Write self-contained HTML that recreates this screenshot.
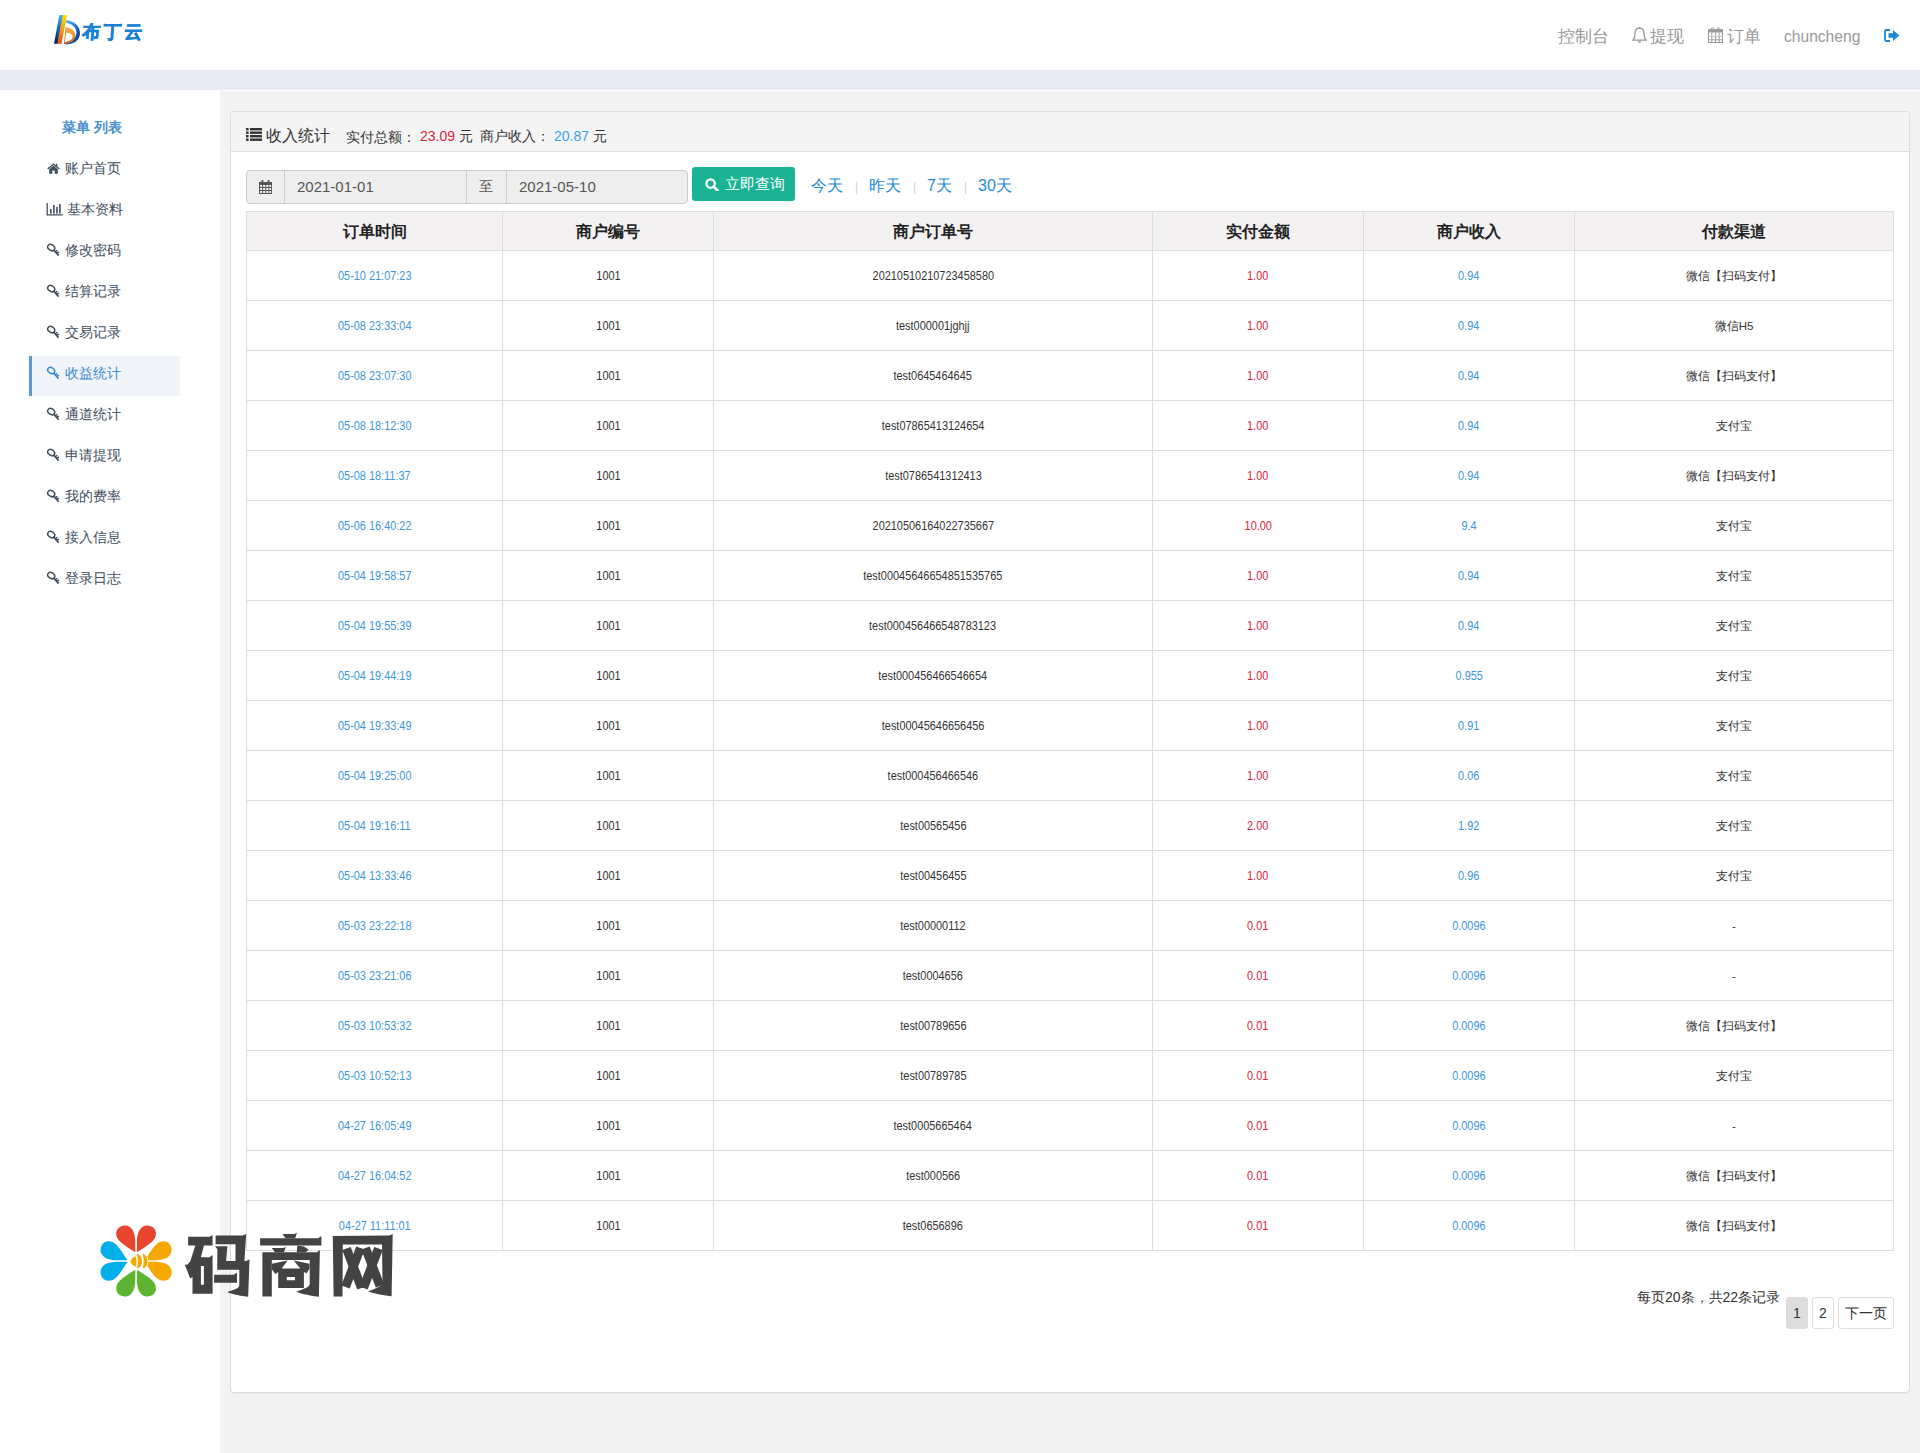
<!DOCTYPE html>
<html><head><meta charset="utf-8"><title>收益统计</title>
<style>
*{box-sizing:border-box;margin:0;padding:0}
html,body{width:1920px;height:1453px;overflow:hidden;background:#fff;font-family:"Liberation Sans",sans-serif;color:#333}
.abs{position:absolute}
.header{position:absolute;left:0;top:0;width:1920px;height:70px;background:#fff}
.band{position:absolute;left:0;top:70px;width:1920px;height:20px;background:#e8ebf4}
.side{position:absolute;left:0;top:90px;width:220px;height:1363px;background:#fff}
.content{position:absolute;left:220px;top:91px;width:1700px;height:1362px;background:#f3f3f3}
.nav{position:absolute;top:27px;height:18px;line-height:18px;font-size:16.5px;color:#999;white-space:nowrap}
.menu-title{position:absolute;left:62px;top:119px;font-size:14px;font-weight:bold;color:#4a90d0;white-space:nowrap}
.mi{position:absolute;left:29px;width:151px;height:40px;font-size:14px;color:#3e4d5c;white-space:nowrap}
.mi .ic{position:absolute;left:18px;top:14px}
.mi span{position:absolute;left:36px;top:11px;line-height:16px}
.mi.active{background:#f1f5f9;border-left:3px solid #5b9ad5;color:#3a8ad0}
.panel{position:absolute;left:230px;top:111px;width:1680px;height:1282px;background:#fff;border:1px solid #ddd;border-radius:4px;overflow:hidden;box-shadow:0 1px 1px rgba(0,0,0,.05)}
.ph{position:absolute;left:0;top:0;width:1678px;height:40px;background:#f5f5f5;border-bottom:1px solid #ddd}
.txt{position:absolute;white-space:nowrap}
.ig{position:absolute;top:170px;height:34px;border:1px solid #ccc;background:#eee}
.cell{position:absolute;text-align:center;white-space:nowrap}
.num{display:inline-block;transform:scaleX(0.84);transform-origin:50% 50%}
.hl{position:absolute;height:1px;background:#ddd}
.vl{position:absolute;width:1px;background:#ddd}
</style></head><body>

<div class="header">
<svg class="abs" style="left:54px;top:14px" width="92" height="32" viewBox="0 0 92 32">
<defs>
<linearGradient id="gb" x1="0" y1="0" x2="0" y2="1"><stop offset="0" stop-color="#4db3f5"/><stop offset="0.5" stop-color="#0f62b8"/><stop offset="1" stop-color="#0b1a45"/></linearGradient>
<linearGradient id="gy" x1="0" y1="0" x2="0" y2="1"><stop offset="0" stop-color="#ffe000"/><stop offset="0.5" stop-color="#f59b1e"/><stop offset="1" stop-color="#e0501a"/></linearGradient>
<linearGradient id="gc" x1="0" y1="0" x2="1" y2="1"><stop offset="0" stop-color="#6cc6ff"/><stop offset="0.6" stop-color="#1060c0"/><stop offset="1" stop-color="#06267a"/></linearGradient>
<linearGradient id="go" x1="0" y1="0" x2="0" y2="1"><stop offset="0" stop-color="#f7a64a"/><stop offset="0.6" stop-color="#e8932a"/><stop offset="1" stop-color="#c0501a"/></linearGradient>
</defs>
<path d="M5.3 1 H9.6 L3.9 29.8 H0 Z" fill="url(#gb)"/>
<path d="M8.8 1 H13 L7.5 29.8 H3.2 Z" fill="url(#gy)"/>
<path d="M12.4 6 C20 7 26 12 26 19 C26 26 20 30.5 11 30.5 L12 28 C18 27 22 24 22.5 19 C22.5 13 17.5 9.5 11.8 9 Z" fill="url(#gc)"/>
<path d="M11.4 13 C17 14 22 17 21.5 22 C21 27 16 29.8 10 30 Z M12.3 18.6 L10.9 28.2 C15.5 27.5 18.5 25.5 18.6 22.5 C18.6 20 15.5 19 12.3 18.6 Z" fill="url(#go)" fill-rule="evenodd"/>
<text x="30" y="24.5" font-size="18" font-weight="bold" letter-spacing="3" fill="#1a80d0" stroke="#1a80d0" stroke-width="0.6" transform="skewX(-4)">布丁云</text>
</svg>
<div class="nav" style="left:1558px">控制台</div>
<svg class="abs" style="left:1632px;top:27px" width="15" height="17" viewBox="0 0 15 17"><path d="M7.5 1.2 C4.3 1.2 3 3.5 3 6.5 C3 10 2.3 11.8 1 13.2 H14 C12.7 11.8 12 10 12 6.5 C12 3.5 10.7 1.2 7.5 1.2 Z" stroke="#999" stroke-width="1.3" fill="none"/><circle cx="7.5" cy="1" r="0.9" fill="#999"/><path d="M5.8 14.2 H9.2 L8.6 15.8 H6.4 Z" fill="#999"/></svg>
<div class="nav" style="left:1650px">提现</div>
<svg class="abs" style="left:1708px;top:27px" width="15" height="16" viewBox="0 0 15 16"><path d="M3.4 4 V2.2 A1.3 1.6 0 0 1 6 2.2 V4 M9.2 4 V2.2 A1.3 1.6 0 0 1 11.8 2.2 V4" stroke="#999" stroke-width="0.9" fill="none"/><rect x="0.5" y="2.7" width="14" height="12.8" fill="none" stroke="#999" stroke-width="1"/><rect x="0.5" y="2.7" width="14" height="2.8" fill="#999"/><path d="M3.8 5.5 V15.5 M7.5 5.5 V15.5 M11.2 5.5 V15.5 M0.5 12.8 H14.5" stroke="#999" stroke-width="0.9"/><path d="M0.5 9.6 H14.5" stroke="#bbb" stroke-width="0.8"/></svg>
<div class="nav" style="left:1727px">订单</div>
<div class="nav" style="left:1784px;top:28px;font-size:15.6px">chuncheng</div>
<svg class="abs" style="left:1884px;top:29px" width="16" height="13" viewBox="0 0 16 13"><path d="M6 1 H2.5 C1.5 1 1 1.6 1 2.5 V10.5 C1 11.4 1.5 12 2.5 12 H6" stroke="#1a8ad8" stroke-width="1.8" fill="none"/><path d="M4.5 4.3 H9 V1 L15.3 6.5 L9 12 V8.7 H4.5 Z" fill="#1a8ad8"/></svg>
</div>
<div class="band"></div>
<div class="side"></div>
<div class="content"></div>
<div class="menu-title">菜单 列表</div>
<div class="abs" style="left:29px;top:356px;width:151px;height:40px;background:#f1f5f9;border-left:3px solid #5b9ad5"></div>
<div class="txt" style="left:65px;top:160px;font-size:14px;line-height:16px;color:#3e4d5c">账户首页</div>
<div class="abs" style="left:47px;top:163px"><svg class="ic" style="display:block" width="13" height="11" viewBox="0 0 13 11"><path d="M6.5 0.3 L0.2 5.6 L1.1 6.5 L6.5 2 L11.9 6.5 L12.8 5.6 L10.3 3.5 L10.3 0.8 L8.9 0.8 L8.9 2.3 Z M2.2 6.2 L2.2 10.8 L5.3 10.8 L5.3 7.6 L7.7 7.6 L7.7 10.8 L10.8 10.8 L10.8 6.2 L6.5 2.7 Z" fill="#3e4d5c"/></svg></div>
<div class="txt" style="left:67px;top:201px;font-size:14px;line-height:16px;color:#3e4d5c">基本资料</div>
<div class="abs" style="left:46px;top:203px"><svg class="ic" style="display:block" width="17" height="13" viewBox="0 0 17 13"><path d="M1.2 0 V11.9 H16.8" stroke="#3e4d5c" stroke-width="1.3" fill="none"/><rect x="4" y="6" width="1.6" height="4.6" fill="#3e4d5c"/><rect x="7.1" y="2" width="1.6" height="8.6" fill="#3e4d5c"/><rect x="10.2" y="4" width="1.6" height="6.6" fill="#3e4d5c"/><rect x="13.1" y="1" width="1.6" height="9.6" fill="#3e4d5c"/></svg></div>
<div class="txt" style="left:65px;top:242px;font-size:14px;line-height:16px;color:#3e4d5c">修改密码</div>
<div class="abs" style="left:46px;top:243px"><svg style="display:block" width="15" height="14" viewBox="0 0 15 14"><ellipse cx="5.2" cy="4.6" rx="3.7" ry="2.8" transform="rotate(32 5.2 4.6)" stroke="#3e4d5c" stroke-width="1.5" fill="none"/><path d="M7.3 6.6 L12.6 12.6" stroke="#3e4d5c" stroke-width="1.6" /><path d="M9.6 8.6 L11.3 7.2 M11.1 10.4 L12.9 8.9" stroke="#3e4d5c" stroke-width="1.4"/></svg></div>
<div class="txt" style="left:65px;top:283px;font-size:14px;line-height:16px;color:#3e4d5c">结算记录</div>
<div class="abs" style="left:46px;top:284px"><svg style="display:block" width="15" height="14" viewBox="0 0 15 14"><ellipse cx="5.2" cy="4.6" rx="3.7" ry="2.8" transform="rotate(32 5.2 4.6)" stroke="#3e4d5c" stroke-width="1.5" fill="none"/><path d="M7.3 6.6 L12.6 12.6" stroke="#3e4d5c" stroke-width="1.6" /><path d="M9.6 8.6 L11.3 7.2 M11.1 10.4 L12.9 8.9" stroke="#3e4d5c" stroke-width="1.4"/></svg></div>
<div class="txt" style="left:65px;top:324px;font-size:14px;line-height:16px;color:#3e4d5c">交易记录</div>
<div class="abs" style="left:46px;top:325px"><svg style="display:block" width="15" height="14" viewBox="0 0 15 14"><ellipse cx="5.2" cy="4.6" rx="3.7" ry="2.8" transform="rotate(32 5.2 4.6)" stroke="#3e4d5c" stroke-width="1.5" fill="none"/><path d="M7.3 6.6 L12.6 12.6" stroke="#3e4d5c" stroke-width="1.6" /><path d="M9.6 8.6 L11.3 7.2 M11.1 10.4 L12.9 8.9" stroke="#3e4d5c" stroke-width="1.4"/></svg></div>
<div class="txt" style="left:65px;top:365px;font-size:14px;line-height:16px;color:#3a8ad0">收益统计</div>
<div class="abs" style="left:46px;top:366px"><svg style="display:block" width="15" height="14" viewBox="0 0 15 14"><ellipse cx="5.2" cy="4.6" rx="3.7" ry="2.8" transform="rotate(32 5.2 4.6)" stroke="#3a8ad0" stroke-width="1.5" fill="none"/><path d="M7.3 6.6 L12.6 12.6" stroke="#3a8ad0" stroke-width="1.6" /><path d="M9.6 8.6 L11.3 7.2 M11.1 10.4 L12.9 8.9" stroke="#3a8ad0" stroke-width="1.4"/></svg></div>
<div class="txt" style="left:65px;top:406px;font-size:14px;line-height:16px;color:#3e4d5c">通道统计</div>
<div class="abs" style="left:46px;top:407px"><svg style="display:block" width="15" height="14" viewBox="0 0 15 14"><ellipse cx="5.2" cy="4.6" rx="3.7" ry="2.8" transform="rotate(32 5.2 4.6)" stroke="#3e4d5c" stroke-width="1.5" fill="none"/><path d="M7.3 6.6 L12.6 12.6" stroke="#3e4d5c" stroke-width="1.6" /><path d="M9.6 8.6 L11.3 7.2 M11.1 10.4 L12.9 8.9" stroke="#3e4d5c" stroke-width="1.4"/></svg></div>
<div class="txt" style="left:65px;top:447px;font-size:14px;line-height:16px;color:#3e4d5c">申请提现</div>
<div class="abs" style="left:46px;top:448px"><svg style="display:block" width="15" height="14" viewBox="0 0 15 14"><ellipse cx="5.2" cy="4.6" rx="3.7" ry="2.8" transform="rotate(32 5.2 4.6)" stroke="#3e4d5c" stroke-width="1.5" fill="none"/><path d="M7.3 6.6 L12.6 12.6" stroke="#3e4d5c" stroke-width="1.6" /><path d="M9.6 8.6 L11.3 7.2 M11.1 10.4 L12.9 8.9" stroke="#3e4d5c" stroke-width="1.4"/></svg></div>
<div class="txt" style="left:65px;top:488px;font-size:14px;line-height:16px;color:#3e4d5c">我的费率</div>
<div class="abs" style="left:46px;top:489px"><svg style="display:block" width="15" height="14" viewBox="0 0 15 14"><ellipse cx="5.2" cy="4.6" rx="3.7" ry="2.8" transform="rotate(32 5.2 4.6)" stroke="#3e4d5c" stroke-width="1.5" fill="none"/><path d="M7.3 6.6 L12.6 12.6" stroke="#3e4d5c" stroke-width="1.6" /><path d="M9.6 8.6 L11.3 7.2 M11.1 10.4 L12.9 8.9" stroke="#3e4d5c" stroke-width="1.4"/></svg></div>
<div class="txt" style="left:65px;top:529px;font-size:14px;line-height:16px;color:#3e4d5c">接入信息</div>
<div class="abs" style="left:46px;top:530px"><svg style="display:block" width="15" height="14" viewBox="0 0 15 14"><ellipse cx="5.2" cy="4.6" rx="3.7" ry="2.8" transform="rotate(32 5.2 4.6)" stroke="#3e4d5c" stroke-width="1.5" fill="none"/><path d="M7.3 6.6 L12.6 12.6" stroke="#3e4d5c" stroke-width="1.6" /><path d="M9.6 8.6 L11.3 7.2 M11.1 10.4 L12.9 8.9" stroke="#3e4d5c" stroke-width="1.4"/></svg></div>
<div class="txt" style="left:65px;top:570px;font-size:14px;line-height:16px;color:#3e4d5c">登录日志</div>
<div class="abs" style="left:46px;top:571px"><svg style="display:block" width="15" height="14" viewBox="0 0 15 14"><ellipse cx="5.2" cy="4.6" rx="3.7" ry="2.8" transform="rotate(32 5.2 4.6)" stroke="#3e4d5c" stroke-width="1.5" fill="none"/><path d="M7.3 6.6 L12.6 12.6" stroke="#3e4d5c" stroke-width="1.6" /><path d="M9.6 8.6 L11.3 7.2 M11.1 10.4 L12.9 8.9" stroke="#3e4d5c" stroke-width="1.4"/></svg></div>
<div class="panel"><div class="ph"></div></div>
<svg class="abs" style="left:246px;top:128px" width="16" height="13" viewBox="0 0 16 13"><rect x="0" y="0" width="2.6" height="2.4" fill="#333"/><rect x="4" y="0" width="12" height="2.4" fill="#333"/><rect x="0" y="3.5" width="2.6" height="2.4" fill="#333"/><rect x="4" y="3.5" width="12" height="2.4" fill="#333"/><rect x="0" y="7" width="2.6" height="2.4" fill="#333"/><rect x="4" y="7" width="12" height="2.4" fill="#333"/><rect x="0" y="10.5" width="2.6" height="2.4" fill="#333"/><rect x="4" y="10.5" width="12" height="2.4" fill="#333"/></svg>
<div class="txt" style="left:266px;top:127px;font-size:16px;line-height:18px;color:#333">收入统计</div>
<div class="txt" style="left:346px;top:129px;font-size:14px;line-height:16px;color:#333">实付总额：</div>
<div class="txt" style="left:420px;top:128px;font-size:14px;line-height:16px;color:#d8243c">23.09</div>
<div class="txt" style="left:459px;top:128px;font-size:14px;line-height:16px;color:#333">元</div>
<div class="txt" style="left:480px;top:128px;font-size:14px;line-height:16px;color:#333">商户收入：</div>
<div class="txt" style="left:554px;top:128px;font-size:14px;line-height:16px;color:#3aa0e8">20.87</div>
<div class="txt" style="left:593px;top:128px;font-size:14px;line-height:16px;color:#333">元</div>
<div class="ig" style="left:246px;width:39px;border-radius:4px 0 0 4px"></div>
<svg class="abs" style="left:259px;top:180px" width="13" height="14" viewBox="0 0 13 14"><rect x="0" y="2" width="13" height="12" fill="#555"/><rect x="2.5" y="0" width="1.8" height="3" fill="#555"/><rect x="8.7" y="0" width="1.8" height="3" fill="#555"/><g fill="#eee"><rect x="1" y="5" width="2.2" height="2"/><rect x="4.1" y="5" width="2.2" height="2"/><rect x="7.2" y="5" width="2.2" height="2"/><rect x="10.3" y="5" width="1.8" height="2"/><rect x="1" y="8" width="2.2" height="2"/><rect x="4.1" y="8" width="2.2" height="2"/><rect x="7.2" y="8" width="2.2" height="2"/><rect x="10.3" y="8" width="1.8" height="2"/><rect x="1" y="11" width="2.2" height="2"/><rect x="4.1" y="11" width="2.2" height="2"/><rect x="7.2" y="11" width="2.2" height="2"/><rect x="10.3" y="11" width="1.8" height="2"/></g></svg>
<div class="ig" style="left:284px;width:183px"></div>
<div class="txt" style="left:297px;top:178px;font-size:15px;line-height:17px;color:#555">2021-01-01</div>
<div class="ig" style="left:466px;width:41px"></div>
<div class="txt" style="left:479px;top:178px;font-size:14px;line-height:17px;color:#555">至</div>
<div class="ig" style="left:506px;width:182px;border-radius:0 4px 4px 0"></div>
<div class="txt" style="left:519px;top:178px;font-size:15px;line-height:17px;color:#555">2021-05-10</div>
<div class="abs" style="left:692px;top:167px;width:103px;height:34px;background:#1ab394;border-radius:3px"></div>
<svg class="abs" style="left:705px;top:178px" width="14" height="13" viewBox="0 0 14 13"><circle cx="5.6" cy="5.6" r="4.2" stroke="#fff" stroke-width="2.2" fill="none"/><path d="M8.6 8.6 L12.6 12.4" stroke="#fff" stroke-width="2.6" stroke-linecap="round"/></svg>
<div class="txt" style="left:725px;top:176px;font-size:14.5px;line-height:16px;color:#fff">立即查询</div>
<div class="txt" style="left:811px;top:177px;font-size:16px;line-height:18px;color:#1a8ad8">今天</div>
<div class="txt" style="left:855px;top:180px;font-size:12px;line-height:14px;color:#c8d4dc">|</div>
<div class="txt" style="left:869px;top:177px;font-size:16px;line-height:18px;color:#1a8ad8">昨天</div>
<div class="txt" style="left:913px;top:180px;font-size:12px;line-height:14px;color:#c8d4dc">|</div>
<div class="txt" style="left:927px;top:177px;font-size:16px;line-height:18px;color:#1a8ad8">7天</div>
<div class="txt" style="left:964px;top:180px;font-size:12px;line-height:14px;color:#c8d4dc">|</div>
<div class="txt" style="left:978px;top:177px;font-size:16px;line-height:18px;color:#1a8ad8">30天</div>
<div class="abs" style="left:246px;top:211px;width:1648px;height:40px;background:#f3f1f2"></div>
<div class="hl" style="left:246px;top:211px;width:1648px"></div>
<div class="hl" style="left:246px;top:250px;width:1648px"></div>
<div class="hl" style="left:246px;top:300px;width:1648px"></div>
<div class="hl" style="left:246px;top:350px;width:1648px"></div>
<div class="hl" style="left:246px;top:400px;width:1648px"></div>
<div class="hl" style="left:246px;top:450px;width:1648px"></div>
<div class="hl" style="left:246px;top:500px;width:1648px"></div>
<div class="hl" style="left:246px;top:550px;width:1648px"></div>
<div class="hl" style="left:246px;top:600px;width:1648px"></div>
<div class="hl" style="left:246px;top:650px;width:1648px"></div>
<div class="hl" style="left:246px;top:700px;width:1648px"></div>
<div class="hl" style="left:246px;top:750px;width:1648px"></div>
<div class="hl" style="left:246px;top:800px;width:1648px"></div>
<div class="hl" style="left:246px;top:850px;width:1648px"></div>
<div class="hl" style="left:246px;top:900px;width:1648px"></div>
<div class="hl" style="left:246px;top:950px;width:1648px"></div>
<div class="hl" style="left:246px;top:1000px;width:1648px"></div>
<div class="hl" style="left:246px;top:1050px;width:1648px"></div>
<div class="hl" style="left:246px;top:1100px;width:1648px"></div>
<div class="hl" style="left:246px;top:1150px;width:1648px"></div>
<div class="hl" style="left:246px;top:1200px;width:1648px"></div>
<div class="hl" style="left:246px;top:1250px;width:1648px"></div>
<div class="vl" style="left:246px;top:211px;height:1040px"></div>
<div class="vl" style="left:502px;top:211px;height:1040px"></div>
<div class="vl" style="left:713px;top:211px;height:1040px"></div>
<div class="vl" style="left:1152px;top:211px;height:1040px"></div>
<div class="vl" style="left:1363px;top:211px;height:1040px"></div>
<div class="vl" style="left:1574px;top:211px;height:1040px"></div>
<div class="vl" style="left:1893px;top:211px;height:1040px"></div>
<div class="cell" style="left:247px;width:255px;top:223px;line-height:18px;font-size:16px;font-weight:bold;color:#222">订单时间</div>
<div class="cell" style="left:503px;width:210px;top:223px;line-height:18px;font-size:16px;font-weight:bold;color:#222">商户编号</div>
<div class="cell" style="left:714px;width:438px;top:223px;line-height:18px;font-size:16px;font-weight:bold;color:#222">商户订单号</div>
<div class="cell" style="left:1153px;width:210px;top:223px;line-height:18px;font-size:16px;font-weight:bold;color:#222">实付金额</div>
<div class="cell" style="left:1364px;width:210px;top:223px;line-height:18px;font-size:16px;font-weight:bold;color:#222">商户收入</div>
<div class="cell" style="left:1575px;width:318px;top:223px;line-height:18px;font-size:16px;font-weight:bold;color:#222">付款渠道</div>
<div class="cell" style="left:247px;width:255px;top:251px;line-height:49px;font-size:13px;color:#3a97dc"><span class="num">05-10 21:07:23</span></div>
<div class="cell" style="left:503px;width:210px;top:251px;line-height:49px;font-size:13px;color:#333"><span class="num">1001</span></div>
<div class="cell" style="left:714px;width:438px;top:251px;line-height:49px;font-size:13px;color:#333"><span class="num">20210510210723458580</span></div>
<div class="cell" style="left:1153px;width:210px;top:251px;line-height:49px;font-size:13px;color:#d8243c"><span class="num">1.00</span></div>
<div class="cell" style="left:1364px;width:210px;top:251px;line-height:49px;font-size:13px;color:#3a97dc"><span class="num">0.94</span></div>
<div class="cell" style="left:1575px;width:318px;top:252px;line-height:49px;font-size:11.5px;color:#333">微信【扫码支付】</div>
<div class="cell" style="left:247px;width:255px;top:301px;line-height:49px;font-size:13px;color:#3a97dc"><span class="num">05-08 23:33:04</span></div>
<div class="cell" style="left:503px;width:210px;top:301px;line-height:49px;font-size:13px;color:#333"><span class="num">1001</span></div>
<div class="cell" style="left:714px;width:438px;top:301px;line-height:49px;font-size:13px;color:#333"><span class="num">test000001jghjj</span></div>
<div class="cell" style="left:1153px;width:210px;top:301px;line-height:49px;font-size:13px;color:#d8243c"><span class="num">1.00</span></div>
<div class="cell" style="left:1364px;width:210px;top:301px;line-height:49px;font-size:13px;color:#3a97dc"><span class="num">0.94</span></div>
<div class="cell" style="left:1575px;width:318px;top:302px;line-height:49px;font-size:11.5px;color:#333">微信H5</div>
<div class="cell" style="left:247px;width:255px;top:351px;line-height:49px;font-size:13px;color:#3a97dc"><span class="num">05-08 23:07:30</span></div>
<div class="cell" style="left:503px;width:210px;top:351px;line-height:49px;font-size:13px;color:#333"><span class="num">1001</span></div>
<div class="cell" style="left:714px;width:438px;top:351px;line-height:49px;font-size:13px;color:#333"><span class="num">test0645464645</span></div>
<div class="cell" style="left:1153px;width:210px;top:351px;line-height:49px;font-size:13px;color:#d8243c"><span class="num">1.00</span></div>
<div class="cell" style="left:1364px;width:210px;top:351px;line-height:49px;font-size:13px;color:#3a97dc"><span class="num">0.94</span></div>
<div class="cell" style="left:1575px;width:318px;top:352px;line-height:49px;font-size:11.5px;color:#333">微信【扫码支付】</div>
<div class="cell" style="left:247px;width:255px;top:401px;line-height:49px;font-size:13px;color:#3a97dc"><span class="num">05-08 18:12:30</span></div>
<div class="cell" style="left:503px;width:210px;top:401px;line-height:49px;font-size:13px;color:#333"><span class="num">1001</span></div>
<div class="cell" style="left:714px;width:438px;top:401px;line-height:49px;font-size:13px;color:#333"><span class="num">test07865413124654</span></div>
<div class="cell" style="left:1153px;width:210px;top:401px;line-height:49px;font-size:13px;color:#d8243c"><span class="num">1.00</span></div>
<div class="cell" style="left:1364px;width:210px;top:401px;line-height:49px;font-size:13px;color:#3a97dc"><span class="num">0.94</span></div>
<div class="cell" style="left:1575px;width:318px;top:402px;line-height:49px;font-size:11.5px;color:#333">支付宝</div>
<div class="cell" style="left:247px;width:255px;top:451px;line-height:49px;font-size:13px;color:#3a97dc"><span class="num">05-08 18:11:37</span></div>
<div class="cell" style="left:503px;width:210px;top:451px;line-height:49px;font-size:13px;color:#333"><span class="num">1001</span></div>
<div class="cell" style="left:714px;width:438px;top:451px;line-height:49px;font-size:13px;color:#333"><span class="num">test0786541312413</span></div>
<div class="cell" style="left:1153px;width:210px;top:451px;line-height:49px;font-size:13px;color:#d8243c"><span class="num">1.00</span></div>
<div class="cell" style="left:1364px;width:210px;top:451px;line-height:49px;font-size:13px;color:#3a97dc"><span class="num">0.94</span></div>
<div class="cell" style="left:1575px;width:318px;top:452px;line-height:49px;font-size:11.5px;color:#333">微信【扫码支付】</div>
<div class="cell" style="left:247px;width:255px;top:501px;line-height:49px;font-size:13px;color:#3a97dc"><span class="num">05-06 16:40:22</span></div>
<div class="cell" style="left:503px;width:210px;top:501px;line-height:49px;font-size:13px;color:#333"><span class="num">1001</span></div>
<div class="cell" style="left:714px;width:438px;top:501px;line-height:49px;font-size:13px;color:#333"><span class="num">20210506164022735667</span></div>
<div class="cell" style="left:1153px;width:210px;top:501px;line-height:49px;font-size:13px;color:#d8243c"><span class="num">10.00</span></div>
<div class="cell" style="left:1364px;width:210px;top:501px;line-height:49px;font-size:13px;color:#3a97dc"><span class="num">9.4</span></div>
<div class="cell" style="left:1575px;width:318px;top:502px;line-height:49px;font-size:11.5px;color:#333">支付宝</div>
<div class="cell" style="left:247px;width:255px;top:551px;line-height:49px;font-size:13px;color:#3a97dc"><span class="num">05-04 19:58:57</span></div>
<div class="cell" style="left:503px;width:210px;top:551px;line-height:49px;font-size:13px;color:#333"><span class="num">1001</span></div>
<div class="cell" style="left:714px;width:438px;top:551px;line-height:49px;font-size:13px;color:#333"><span class="num">test00045646654851535765</span></div>
<div class="cell" style="left:1153px;width:210px;top:551px;line-height:49px;font-size:13px;color:#d8243c"><span class="num">1.00</span></div>
<div class="cell" style="left:1364px;width:210px;top:551px;line-height:49px;font-size:13px;color:#3a97dc"><span class="num">0.94</span></div>
<div class="cell" style="left:1575px;width:318px;top:552px;line-height:49px;font-size:11.5px;color:#333">支付宝</div>
<div class="cell" style="left:247px;width:255px;top:601px;line-height:49px;font-size:13px;color:#3a97dc"><span class="num">05-04 19:55:39</span></div>
<div class="cell" style="left:503px;width:210px;top:601px;line-height:49px;font-size:13px;color:#333"><span class="num">1001</span></div>
<div class="cell" style="left:714px;width:438px;top:601px;line-height:49px;font-size:13px;color:#333"><span class="num">test000456466548783123</span></div>
<div class="cell" style="left:1153px;width:210px;top:601px;line-height:49px;font-size:13px;color:#d8243c"><span class="num">1.00</span></div>
<div class="cell" style="left:1364px;width:210px;top:601px;line-height:49px;font-size:13px;color:#3a97dc"><span class="num">0.94</span></div>
<div class="cell" style="left:1575px;width:318px;top:602px;line-height:49px;font-size:11.5px;color:#333">支付宝</div>
<div class="cell" style="left:247px;width:255px;top:651px;line-height:49px;font-size:13px;color:#3a97dc"><span class="num">05-04 19:44:19</span></div>
<div class="cell" style="left:503px;width:210px;top:651px;line-height:49px;font-size:13px;color:#333"><span class="num">1001</span></div>
<div class="cell" style="left:714px;width:438px;top:651px;line-height:49px;font-size:13px;color:#333"><span class="num">test000456466546654</span></div>
<div class="cell" style="left:1153px;width:210px;top:651px;line-height:49px;font-size:13px;color:#d8243c"><span class="num">1.00</span></div>
<div class="cell" style="left:1364px;width:210px;top:651px;line-height:49px;font-size:13px;color:#3a97dc"><span class="num">0.955</span></div>
<div class="cell" style="left:1575px;width:318px;top:652px;line-height:49px;font-size:11.5px;color:#333">支付宝</div>
<div class="cell" style="left:247px;width:255px;top:701px;line-height:49px;font-size:13px;color:#3a97dc"><span class="num">05-04 19:33:49</span></div>
<div class="cell" style="left:503px;width:210px;top:701px;line-height:49px;font-size:13px;color:#333"><span class="num">1001</span></div>
<div class="cell" style="left:714px;width:438px;top:701px;line-height:49px;font-size:13px;color:#333"><span class="num">test00045646656456</span></div>
<div class="cell" style="left:1153px;width:210px;top:701px;line-height:49px;font-size:13px;color:#d8243c"><span class="num">1.00</span></div>
<div class="cell" style="left:1364px;width:210px;top:701px;line-height:49px;font-size:13px;color:#3a97dc"><span class="num">0.91</span></div>
<div class="cell" style="left:1575px;width:318px;top:702px;line-height:49px;font-size:11.5px;color:#333">支付宝</div>
<div class="cell" style="left:247px;width:255px;top:751px;line-height:49px;font-size:13px;color:#3a97dc"><span class="num">05-04 19:25:00</span></div>
<div class="cell" style="left:503px;width:210px;top:751px;line-height:49px;font-size:13px;color:#333"><span class="num">1001</span></div>
<div class="cell" style="left:714px;width:438px;top:751px;line-height:49px;font-size:13px;color:#333"><span class="num">test000456466546</span></div>
<div class="cell" style="left:1153px;width:210px;top:751px;line-height:49px;font-size:13px;color:#d8243c"><span class="num">1.00</span></div>
<div class="cell" style="left:1364px;width:210px;top:751px;line-height:49px;font-size:13px;color:#3a97dc"><span class="num">0.06</span></div>
<div class="cell" style="left:1575px;width:318px;top:752px;line-height:49px;font-size:11.5px;color:#333">支付宝</div>
<div class="cell" style="left:247px;width:255px;top:801px;line-height:49px;font-size:13px;color:#3a97dc"><span class="num">05-04 19:16:11</span></div>
<div class="cell" style="left:503px;width:210px;top:801px;line-height:49px;font-size:13px;color:#333"><span class="num">1001</span></div>
<div class="cell" style="left:714px;width:438px;top:801px;line-height:49px;font-size:13px;color:#333"><span class="num">test00565456</span></div>
<div class="cell" style="left:1153px;width:210px;top:801px;line-height:49px;font-size:13px;color:#d8243c"><span class="num">2.00</span></div>
<div class="cell" style="left:1364px;width:210px;top:801px;line-height:49px;font-size:13px;color:#3a97dc"><span class="num">1.92</span></div>
<div class="cell" style="left:1575px;width:318px;top:802px;line-height:49px;font-size:11.5px;color:#333">支付宝</div>
<div class="cell" style="left:247px;width:255px;top:851px;line-height:49px;font-size:13px;color:#3a97dc"><span class="num">05-04 13:33:46</span></div>
<div class="cell" style="left:503px;width:210px;top:851px;line-height:49px;font-size:13px;color:#333"><span class="num">1001</span></div>
<div class="cell" style="left:714px;width:438px;top:851px;line-height:49px;font-size:13px;color:#333"><span class="num">test00456455</span></div>
<div class="cell" style="left:1153px;width:210px;top:851px;line-height:49px;font-size:13px;color:#d8243c"><span class="num">1.00</span></div>
<div class="cell" style="left:1364px;width:210px;top:851px;line-height:49px;font-size:13px;color:#3a97dc"><span class="num">0.96</span></div>
<div class="cell" style="left:1575px;width:318px;top:852px;line-height:49px;font-size:11.5px;color:#333">支付宝</div>
<div class="cell" style="left:247px;width:255px;top:901px;line-height:49px;font-size:13px;color:#3a97dc"><span class="num">05-03 23:22:18</span></div>
<div class="cell" style="left:503px;width:210px;top:901px;line-height:49px;font-size:13px;color:#333"><span class="num">1001</span></div>
<div class="cell" style="left:714px;width:438px;top:901px;line-height:49px;font-size:13px;color:#333"><span class="num">test00000112</span></div>
<div class="cell" style="left:1153px;width:210px;top:901px;line-height:49px;font-size:13px;color:#d8243c"><span class="num">0.01</span></div>
<div class="cell" style="left:1364px;width:210px;top:901px;line-height:49px;font-size:13px;color:#3a97dc"><span class="num">0.0096</span></div>
<div class="cell" style="left:1575px;width:318px;top:902px;line-height:49px;font-size:11.5px;color:#333">-</div>
<div class="cell" style="left:247px;width:255px;top:951px;line-height:49px;font-size:13px;color:#3a97dc"><span class="num">05-03 23:21:06</span></div>
<div class="cell" style="left:503px;width:210px;top:951px;line-height:49px;font-size:13px;color:#333"><span class="num">1001</span></div>
<div class="cell" style="left:714px;width:438px;top:951px;line-height:49px;font-size:13px;color:#333"><span class="num">test0004656</span></div>
<div class="cell" style="left:1153px;width:210px;top:951px;line-height:49px;font-size:13px;color:#d8243c"><span class="num">0.01</span></div>
<div class="cell" style="left:1364px;width:210px;top:951px;line-height:49px;font-size:13px;color:#3a97dc"><span class="num">0.0096</span></div>
<div class="cell" style="left:1575px;width:318px;top:952px;line-height:49px;font-size:11.5px;color:#333">-</div>
<div class="cell" style="left:247px;width:255px;top:1001px;line-height:49px;font-size:13px;color:#3a97dc"><span class="num">05-03 10:53:32</span></div>
<div class="cell" style="left:503px;width:210px;top:1001px;line-height:49px;font-size:13px;color:#333"><span class="num">1001</span></div>
<div class="cell" style="left:714px;width:438px;top:1001px;line-height:49px;font-size:13px;color:#333"><span class="num">test00789656</span></div>
<div class="cell" style="left:1153px;width:210px;top:1001px;line-height:49px;font-size:13px;color:#d8243c"><span class="num">0.01</span></div>
<div class="cell" style="left:1364px;width:210px;top:1001px;line-height:49px;font-size:13px;color:#3a97dc"><span class="num">0.0096</span></div>
<div class="cell" style="left:1575px;width:318px;top:1002px;line-height:49px;font-size:11.5px;color:#333">微信【扫码支付】</div>
<div class="cell" style="left:247px;width:255px;top:1051px;line-height:49px;font-size:13px;color:#3a97dc"><span class="num">05-03 10:52:13</span></div>
<div class="cell" style="left:503px;width:210px;top:1051px;line-height:49px;font-size:13px;color:#333"><span class="num">1001</span></div>
<div class="cell" style="left:714px;width:438px;top:1051px;line-height:49px;font-size:13px;color:#333"><span class="num">test00789785</span></div>
<div class="cell" style="left:1153px;width:210px;top:1051px;line-height:49px;font-size:13px;color:#d8243c"><span class="num">0.01</span></div>
<div class="cell" style="left:1364px;width:210px;top:1051px;line-height:49px;font-size:13px;color:#3a97dc"><span class="num">0.0096</span></div>
<div class="cell" style="left:1575px;width:318px;top:1052px;line-height:49px;font-size:11.5px;color:#333">支付宝</div>
<div class="cell" style="left:247px;width:255px;top:1101px;line-height:49px;font-size:13px;color:#3a97dc"><span class="num">04-27 16:05:49</span></div>
<div class="cell" style="left:503px;width:210px;top:1101px;line-height:49px;font-size:13px;color:#333"><span class="num">1001</span></div>
<div class="cell" style="left:714px;width:438px;top:1101px;line-height:49px;font-size:13px;color:#333"><span class="num">test0005665464</span></div>
<div class="cell" style="left:1153px;width:210px;top:1101px;line-height:49px;font-size:13px;color:#d8243c"><span class="num">0.01</span></div>
<div class="cell" style="left:1364px;width:210px;top:1101px;line-height:49px;font-size:13px;color:#3a97dc"><span class="num">0.0096</span></div>
<div class="cell" style="left:1575px;width:318px;top:1102px;line-height:49px;font-size:11.5px;color:#333">-</div>
<div class="cell" style="left:247px;width:255px;top:1151px;line-height:49px;font-size:13px;color:#3a97dc"><span class="num">04-27 16:04:52</span></div>
<div class="cell" style="left:503px;width:210px;top:1151px;line-height:49px;font-size:13px;color:#333"><span class="num">1001</span></div>
<div class="cell" style="left:714px;width:438px;top:1151px;line-height:49px;font-size:13px;color:#333"><span class="num">test000566</span></div>
<div class="cell" style="left:1153px;width:210px;top:1151px;line-height:49px;font-size:13px;color:#d8243c"><span class="num">0.01</span></div>
<div class="cell" style="left:1364px;width:210px;top:1151px;line-height:49px;font-size:13px;color:#3a97dc"><span class="num">0.0096</span></div>
<div class="cell" style="left:1575px;width:318px;top:1152px;line-height:49px;font-size:11.5px;color:#333">微信【扫码支付】</div>
<div class="cell" style="left:247px;width:255px;top:1201px;line-height:49px;font-size:13px;color:#3a97dc"><span class="num">04-27 11:11:01</span></div>
<div class="cell" style="left:503px;width:210px;top:1201px;line-height:49px;font-size:13px;color:#333"><span class="num">1001</span></div>
<div class="cell" style="left:714px;width:438px;top:1201px;line-height:49px;font-size:13px;color:#333"><span class="num">test0656896</span></div>
<div class="cell" style="left:1153px;width:210px;top:1201px;line-height:49px;font-size:13px;color:#d8243c"><span class="num">0.01</span></div>
<div class="cell" style="left:1364px;width:210px;top:1201px;line-height:49px;font-size:13px;color:#3a97dc"><span class="num">0.0096</span></div>
<div class="cell" style="left:1575px;width:318px;top:1202px;line-height:49px;font-size:11.5px;color:#333">微信【扫码支付】</div>
<div class="txt" style="left:1637px;top:1289px;font-size:14px;line-height:16px;color:#333">每页20条，共22条记录</div>
<div class="abs" style="left:1786px;top:1297px;width:22px;height:32px;background:#ddd;border:1px solid #ddd;border-radius:3px;font-size:14px;line-height:30px;text-align:center;color:#333">1</div>
<div class="abs" style="left:1812px;top:1297px;width:22px;height:32px;background:#fff;border:1px solid #ddd;border-radius:3px;font-size:14px;line-height:30px;text-align:center;color:#333">2</div>
<div class="abs" style="left:1838px;top:1297px;width:56px;height:32px;background:#fff;border:1px solid #ddd;border-radius:3px;font-size:14px;line-height:30px;text-align:center;color:#333">下一页</div>
<svg class="abs" style="left:0;top:0;overflow:visible" width="1" height="1">
<g transform="translate(100,1225)">
 <g id="pt"><path d="M35.3,27.3 C31,24.5 24,20.5 19.5,16 C15.5,12 15.2,6 18.5,3 C21.5,0 27,-0.5 30.5,2.5 C34,5.5 35,11 35.3,16 Z" fill="#e8452f"/></g>
 <path transform="translate(72.2,0) scale(-1,1)" d="M35.3,27.3 C31,24.5 24,20.5 19.5,16 C15.5,12 15.2,6 18.5,3 C21.5,0 27,-0.5 30.5,2.5 C34,5.5 35,11 35.3,16 Z" fill="#e8452f"/>
 <path transform="rotate(90 36.1 36)" d="M35.3,27.3 C31,24.5 24,20.5 19.5,16 C15.5,12 15.2,6 18.5,3 C21.5,0 27,-0.5 30.5,2.5 C34,5.5 35,11 35.3,16 Z" fill="#f5a800"/>
 <path transform="rotate(90 36.1 36) translate(72.2,0) scale(-1,1)" d="M35.3,27.3 C31,24.5 24,20.5 19.5,16 C15.5,12 15.2,6 18.5,3 C21.5,0 27,-0.5 30.5,2.5 C34,5.5 35,11 35.3,16 Z" fill="#f5a800"/>
 <path transform="rotate(180 36.1 36)" d="M35.3,27.3 C31,24.5 24,20.5 19.5,16 C15.5,12 15.2,6 18.5,3 C21.5,0 27,-0.5 30.5,2.5 C34,5.5 35,11 35.3,16 Z" fill="#5db431"/>
 <path transform="rotate(180 36.1 36) translate(72.2,0) scale(-1,1)" d="M35.3,27.3 C31,24.5 24,20.5 19.5,16 C15.5,12 15.2,6 18.5,3 C21.5,0 27,-0.5 30.5,2.5 C34,5.5 35,11 35.3,16 Z" fill="#5db431"/>
 <path transform="rotate(270 36.1 36)" d="M35.3,27.3 C31,24.5 24,20.5 19.5,16 C15.5,12 15.2,6 18.5,3 C21.5,0 27,-0.5 30.5,2.5 C34,5.5 35,11 35.3,16 Z" fill="#00aee9"/>
 <path transform="rotate(270 36.1 36) translate(72.2,0) scale(-1,1)" d="M35.3,27.3 C31,24.5 24,20.5 19.5,16 C15.5,12 15.2,6 18.5,3 C21.5,0 27,-0.5 30.5,2.5 C34,5.5 35,11 35.3,16 Z" fill="#00aee9"/>
 <circle cx="39" cy="36.2" r="9.5" fill="#fff"/>
 <g fill="#f5a800">
  <path d="M35.6,31.2 C32,32.5 30.4,35 30.6,36.8 C30.9,38.8 32.8,40.8 35.6,41.6 C36.8,38.2 36.8,34.8 35.6,31.2 Z"/>
  <path d="M36.6,29 C39.8,28.9 42,32.3 42,36.2 C42,40.1 39.8,43.5 36.6,43.4 C38.3,40.2 38.5,32.8 36.6,29 Z"/>
  <path d="M42.4,29 C45.6,29.2 47.6,32.4 47.6,36.2 C47.6,40 45.6,43.2 42.4,43.4 C44.1,40.2 44.3,32.8 42.4,29 Z"/>
 </g>
</g>
<g fill="#434343">
 <g transform="translate(180,1228)">
  <path fill-rule="evenodd" d="M8.1,8.7 L29.5,8.7 L32.6,7.1 L32.6,17.6 L23.9,17.6 L20.9,29.3 L29.5,29.3 L32.6,27 L32.6,65.7 L12.5,65.7 L12.5,48.9 L10.2,50.4 L4.8,36.7 L7.6,36.4 L10.2,33.6 L15.3,17.6 L8.1,17.6 Z M20.9,37.9 L23.9,37.9 L23.9,56.8 L20.9,56.8 Z"/>
  <path d="M35.6,7.6 L62.6,7.6 L66.2,6.1 L64.4,33.1 L66.2,33.1 L69.5,31.3 L68.2,68.7 C62,68 53,66.5 47.1,64.2 C52,62.5 56.5,60.8 57.5,60 C59,59 59.3,58 59.3,56 L59.3,41.8 L37.2,41.8 L37.4,21.4 L35.1,18.3 L47.4,18.3 L46.1,33.1 L55.5,33.1 L55.5,16.3 L35.6,16.3 Z"/>
  <path d="M34.1,46.8 L53.5,46.8 L57,44.8 L57,54.7 L34.1,54.7 Z"/>
 </g>
 <g transform="translate(255,1226)">
  <path d="M27.5,8.1 L39.7,8.1 L42,6.4 L40.2,12.2 L30.5,12.2 Z"/>
  <path d="M5.1,12.2 L63.1,12.2 L66.4,9.9 L66.4,19.6 L5.1,19.6 Z"/>
  <path d="M16.8,22.1 L28.3,22.1 L30.8,20.9 L29,26.2 L19.9,26.2 Z"/>
  <path d="M42.3,19.6 L48.9,20.4 L53.7,23.4 L50.9,26.2 L41.8,26.2 Z"/>
  <path d="M7.4,26.2 L61.9,26.2 L64.9,23.9 L63.9,70.8 C57,70 47,68 41,65.7 C46,63.8 50,62.5 52,61.5 C54,60.3 54.7,59 54.7,57 L54.7,33.9 L16.8,33.9 L16.8,70.5 L7.4,70.5 Z"/>
  <path fill-rule="evenodd" d="M16.8,37.7 L32.6,34.6 L26.7,42.5 L45.3,42.5 L38.7,34.6 L54.5,37.7 L54.5,42.8 L51.4,47.4 L48.9,45.8 L48.9,61.9 L23.2,61.9 L23.2,46.1 L20.4,47.9 L16.8,43.3 Z M31.8,50.9 L40,50.9 L40,54.2 L31.8,54.2 Z"/>
 </g>
 <g transform="translate(328,1226)">
  <path d="M4.8,9.9 L61.1,9.4 L64.7,8.1 L63.6,70.3 C57,69.5 46,67.5 40.2,65.4 C45,63.5 49.5,61.8 51.4,60.6 C53.5,59.5 54.5,58.5 54.5,57 L54,18.6 L14.8,18.6 L14.5,70.5 L5.6,70.5 Z"/>
  <g stroke="#434343" stroke-width="9" stroke-linecap="butt">
   <path d="M18.5,22.5 L33.5,62"/>
   <path d="M32.5,22 L17.5,61"/>
   <path d="M37.5,22 L52,60"/>
   <path d="M50.5,22.5 L35.5,62"/>
  </g>
 </g>
</g>
</svg>

</body></html>
